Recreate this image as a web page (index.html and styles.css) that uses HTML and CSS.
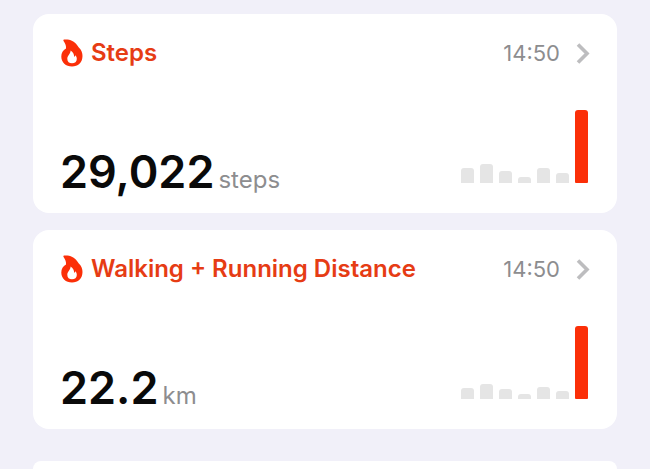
FILE: index.html
```html
<!DOCTYPE html>
<html lang="en">
<head>
<meta charset="utf-8">
<meta name="viewport" content="width=device-width, initial-scale=1">
<title>Health summary</title>
<link rel="stylesheet" href="styles.css">
</head>
<body>
<svg class="symbols" aria-hidden="true">
  <symbol id="flame" viewBox="0 0 24 28">
    <path fill="currentColor" fill-rule="evenodd" d="M4 .5C9.500 0 14.500 2 17 6C17.700 7 18.200 7.800 18.600 8.300C21.500 11 22.500 14 22.500 17C22.500 23.500 18 27.500 12 27.500C5.800 27.500 1.300 23.500 1.300 17.500C1.300 14 3 11.200 6 9.500C6.300 6.500 5.300 4.500 3.700 2.200C3.200 1.500 3.300.7 4 .5ZM10.500 11.500C11 14.500 7.300 16.300 7.300 19.700C7.300 22.600 9.200 24.300 12 24.300C14.900 24.300 16.800 22.500 16.800 19.900C16.800 18.300 16.200 17.100 15.300 16.200C15.100 17.100 14.700 17.600 14.200 17.900C14.200 15.300 13 12.800 10.500 11.500Z"/>
  </symbol>
  <symbol id="chevron" viewBox="0 0 14 22">
    <path fill="none" stroke="currentColor" stroke-width="3.600" stroke-linejoin="miter" d="M2 2.500 11 11.500 2 20.500"/>
  </symbol>
</svg>
<main class="summary">
  <a class="card" href="#steps">
    <div class="card-head">
      <svg class="flame" aria-hidden="true"><use href="#flame"/></svg>
      <h2 class="title">Steps</h2>
      <time class="time">14:50</time>
      <svg class="chevron" aria-hidden="true"><use href="#chevron"/></svg>
    </div>
    <div class="card-body">
      <p class="reading"><span class="value">29,022</span><span class="unit">steps</span></p>
      <div class="chart" role="img" aria-label="Steps over the last seven days">
        <span class="bar" style="height:15px"></span>
        <span class="bar" style="height:19px"></span>
        <span class="bar" style="height:12px"></span>
        <span class="bar" style="height:6px"></span>
        <span class="bar" style="height:15px"></span>
        <span class="bar" style="height:10px"></span>
        <span class="bar today" style="height:73px"></span>
      </div>
    </div>
  </a>
  <a class="card" href="#distance">
    <div class="card-head">
      <svg class="flame" aria-hidden="true"><use href="#flame"/></svg>
      <h2 class="title">Walking + Running Distance</h2>
      <time class="time">14:50</time>
      <svg class="chevron" aria-hidden="true"><use href="#chevron"/></svg>
    </div>
    <div class="card-body">
      <p class="reading"><span class="value">22.2</span><span class="unit">km</span></p>
      <div class="chart" role="img" aria-label="Distance over the last seven days">
        <span class="bar" style="height:11px"></span>
        <span class="bar" style="height:15px"></span>
        <span class="bar" style="height:10px"></span>
        <span class="bar" style="height:5px"></span>
        <span class="bar" style="height:12px"></span>
        <span class="bar" style="height:8px"></span>
        <span class="bar today" style="height:73px"></span>
      </div>
    </div>
  </a>
  <section class="next-card"></section>
</main>
</body>
</html>
```
FILE: styles.css
```css
* {
  box-sizing: border-box;
}

body {
  margin: 0;
  background: #f1f0f9;
  color: #0a0a0a;
  font-family: Inter, "Liberation Sans", sans-serif;
}

.symbols {
  position: absolute;
  width: 0;
  height: 0;
}

.summary {
  display: flex;
  flex-direction: column;
  gap: 17px;
  min-height: 100vh;
  padding: 14px 33px 0;
}

.card {
  display: block;
  padding: 24px 27px 14px;
  border-radius: 16px;
  background: #fff;
  color: inherit;
  text-decoration: none;
}

.next-card {
  flex: 1;
  margin-top: 15px;
  border-radius: 16px 16px 0 0;
  background: #fff;
}

.card-head {
  display: flex;
  align-items: center;
  height: 30px;
}

.flame {
  width: 24px;
  height: 28px;
  color: #fb2f08;
}

.title {
  flex: 1;
  margin: 0;
  padding-left: 7px;
  color: #e63c14;
  font-size: 24px;
  font-weight: 600;
  line-height: 30px;
}

.time {
  color: #8d8d8f;
  font-size: 22px;
  line-height: 30px;
}

.chevron {
  width: 14px;
  height: 22px;
  margin-left: 16px;
  color: #bdbdbf;
}

.card-body {
  display: flex;
  align-items: flex-end;
  justify-content: space-between;
  height: 131px;
}

.reading {
  display: flex;
  align-items: baseline;
  gap: 4px;
  margin: 0;
  line-height: 38px;
}

.value {
  font-size: 45px;
  font-weight: 600;
}

.unit {
  color: #8d8d8f;
  font-size: 24px;
}

.chart {
  display: flex;
  align-items: flex-end;
  gap: 6px;
  padding: 0 2px 16px 0;
}

.bar {
  width: 13px;
  border-radius: 3px 3px 0 0;
  background: #e5e5e5;
}

.today {
  border-radius: 3px 3px 1px 1px;
  background: #fb2f08;
}
```
